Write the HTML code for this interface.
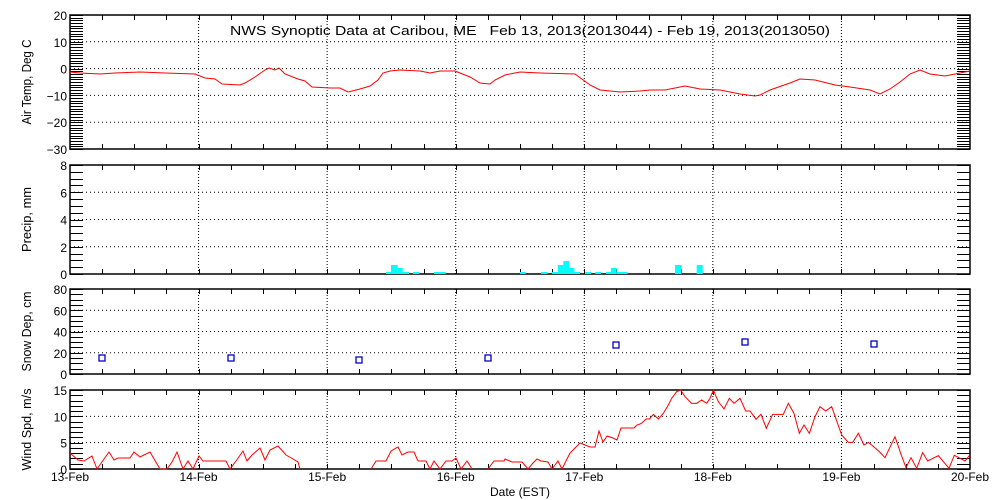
<!DOCTYPE html>
<html><head><meta charset="utf-8"><style>
body{margin:0;background:#fff;}
svg{display:block;font-family:"Liberation Sans",sans-serif;}
</style></head><body>
<svg id="s" width="1000" height="500" xmlns="http://www.w3.org/2000/svg">
<rect width="1000" height="500" fill="#fff"/>
<text x="530" y="35" font-size="13" text-anchor="middle" textLength="600" lengthAdjust="spacingAndGlyphs" style="white-space:pre" xml:space="preserve">NWS Synoptic Data at Caribou, ME   Feb 13, 2013(2013044) - Feb 19, 2013(2013050)</text>
<g id="g"></g>
</svg>
<script>
var NS="http://www.w3.org/2000/svg",g=document.getElementById('g');
function el(t,a,txt){var e=document.createElementNS(NS,t);for(var k in a)e.setAttribute(k,a[k]);if(txt!==undefined)e.textContent=txt;g.appendChild(e);return e;}
var X0=70,X1=970,DW=900/7;
var panels=[
 {t:15,b:149,min:-30,max:20,major:10,minor:1,label:"Air Temp, Deg C",L:85},
 {t:165,b:274,min:0,max:8,major:2,minor:0.5,label:"Precip, mm",L:65},
 {t:289,b:374,min:0,max:80,major:20,minor:5,label:"Snow Dep, cm",L:80},
 {t:390,b:469,min:0,max:15,major:5,minor:1,label:"Wind Spd, m/s",L:82}];
panels.forEach(function(p){
 function Y(v){return p.b-(v-p.min)/(p.max-p.min)*(p.b-p.t);}
 for(var d=1;d<7;d++){var x=X0+d*DW;el('line',{x1:x,x2:x,y1:p.t,y2:p.b,stroke:'#000','stroke-dasharray':'1,2'});}
 for(var v=p.min+p.major;v<p.max;v+=p.major){el('line',{x1:X0,x2:X1,y1:Y(v),y2:Y(v),stroke:'#000','stroke-dasharray':'1,3'});}
 for(var v=p.min;v<=p.max+1e-6;v+=p.minor){var y=Math.round(Y(v))+0.5;el('line',{x1:X0,x2:X0+13,y1:y,y2:y,stroke:'#000'});el('line',{x1:X1-13,x2:X1,y1:y,y2:y,stroke:'#000'});}
 for(var i=1;i<28;i++){var x=Math.round(X0+i*DW/4)+0.5;el('line',{x1:x,x2:x,y1:p.t,y2:p.t+5,stroke:'#000'});el('line',{x1:x,x2:x,y1:p.b-5,y2:p.b,stroke:'#000'});}
 el('rect',{x:X0,y:p.t,width:X1-X0,height:p.b-p.t,fill:'none',stroke:'#000','stroke-width':1.5});
 for(var v=p.min;v<=p.max+1e-6;v+=p.major){el('text',{x:67,y:Y(v)+5,'font-size':12,'text-anchor':'end'},String(v).replace('-','\u2212'));}
 var cy=(p.t+p.b)/2;
 el('text',{x:0,y:0,'font-size':13,'text-anchor':'middle',textLength:p.L,lengthAdjust:'spacingAndGlyphs',transform:'translate(31,'+cy+') rotate(-90)'},p.label);
});
var days=["13-Feb","14-Feb","15-Feb","16-Feb","17-Feb","18-Feb","19-Feb","20-Feb"];
days.forEach(function(d,i){el('text',{x:X0+i*DW,y:481,'font-size':12,'text-anchor':'middle'},d);});
el('text',{x:520,y:496,'font-size':12,'text-anchor':'middle'},"Date (EST)");
var T=[[70,72],[80,73],[100,74],[115,73],[140,72],[165,73],[195,74],[205,78],[215,79],[222,84],[240,85],[245,83],[255,77],[265,70],[269,68],[275,70],[279,68],[285,74],[298,79],[305,81],[312,87],[330,88],[340,88],[348,92],[360,89],[370,86],[378,80],[383,73],[390,71],[400,70],[420,71],[430,73],[440,71],[455,71],[470,77],[480,83],[490,84],[495,80],[505,75],[520,72],[540,73],[575,74],[590,85],[600,90],[620,92],[640,91],[650,90],[665,90],[685,86],[700,89],[720,90],[740,94],[755,96],[760,95],[770,90],[790,83],[800,79],[815,80],[835,85],[850,87],[870,90],[880,94],[890,89],[900,82],[910,74],[920,70],[930,74],[945,76],[960,73],[970,71]];
el('polyline',{points:T.map(function(p){return p.join(',')}).join(' '),fill:'none',stroke:'#f00'});
var P=[[386,391,272],[391,397.7,265],[397.7,402.7,268],[402.7,409,272],[413,419.3,272],[434,445.7,272],[520,525.7,272],[541,547.7,272],[552,558,272],[558,563.3,265],[563.3,569,261],[569,574.3,268],[574.3,580,272],[585,591,272],[595.3,601,272],[606,611,272],[611,616.7,268],[616.7,627.7,272],[675,681.7,265],[696.7,702.7,265]];
P.forEach(function(b){el('rect',{x:b[0],y:b[2],width:b[1]-b[0],height:274-b[2],fill:'#0ff'});});
[[102,358],[231,358],[359,360],[488,358],[616,345],[745,342],[874,344]].forEach(function(s){el('rect',{x:s[0]-3,y:s[1]-3,width:6,height:6,fill:'none',stroke:'#00c','stroke-width':1.3});});
var W1=[[70,453],[78,460],[84,461],[92,456],[97,469],[109,452],[114,460],[118,458],[130,458],[134,452],[140,457],[150,452],[160,469],[167,469],[172,462],[177,452],[183,469],[188,461],[193,469],[199,456],[203,461],[226,461],[230,469],[236,461],[243,451],[247,461],[252,455],[260,448],[265,460],[270,450],[278,446],[286,455],[293,459],[298,462],[300,469]];
var W2=[[371,469],[376,461],[386,461],[391,451],[398,447],[402,455],[408,452],[414,452],[418,461],[426,461],[430,469],[434,461],[440,469],[446,461],[452,461],[456,458],[461,469],[467,461],[472,469]];
var W3=[[488,469],[494,461],[504,461],[505,459],[512,462],[522,462],[528,469],[533,463],[537,459],[541,461],[548,462],[552,469],[558,461],[562,469],[570,453],[580,443],[590,447],[595,447],[599,431],[603,442],[607,436],[613,438],[617,440],[621,428],[634,428],[637,425],[640,424],[642,423],[646,419],[650,419]];
var Z=[[0,100],[10,88],[25,102],[40,85],[55,60],[65,40],[80,20],[92,15],[105,35],[125,55],[140,55],[155,45],[170,55],[180,40],[190,15],[205,50],[222,72],[238,40],[252,55],[270,40],[287,78],[300,78],[318,103],[333,88],[349,130],[368,88],[400,88],[415,55],[432,85],[448,145],[462,120],[478,145],[495,95],[510,65],[527,78],[545,65],[575,150],[595,172],[608,172],[625,145],[642,180],[655,172],[665,180],[688,200],[705,218],[735,155],[752,205],[768,248],[783,218],[800,250],[818,203],[833,228],[865,212],[897,250],[913,211],[930,220],[945,228],[958,212]];
Z.forEach(function(p){W3.push([650+p[0]/3,385+p[1]/3]);});
[W1,W2,W3].forEach(function(w){el('polyline',{points:w.map(function(p){return p.join(',')}).join(' '),fill:'none',stroke:'#f00'});});
</script>
</body></html>
